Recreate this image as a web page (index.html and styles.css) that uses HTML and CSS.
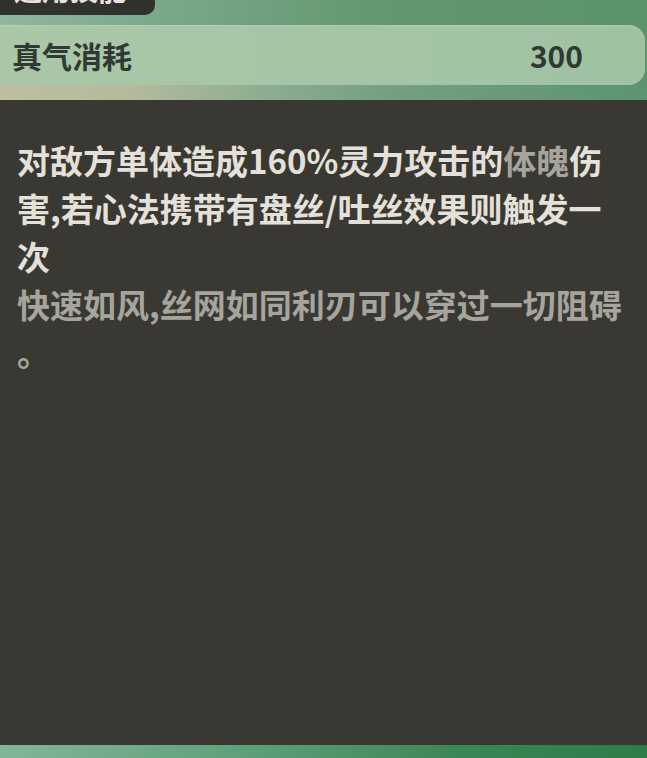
FILE: index.html
```html
<!doctype html>
<html lang="zh-CN">
  <head>
    <meta charset="UTF-8" />
    <meta name="viewport" content="width=device-width, initial-scale=1.0" />
    <title>技能详情</title>
    <link rel="stylesheet" href="styles.css">
  </head>
  <body>
    <div class="screen">
      <div class="header">
        <div class="tag"><span class="tag-text">通用技能</span></div>
        <div class="cost-bar">
          <span class="cost-label">真气消耗</span>
          <span class="cost-value">300</span>
        </div>
        <div class="rim"></div>
      </div>

      <!-- 技能描述 -->
      <div class="panel">
        <p class="desc">对敌方单体造成160%灵力攻击的<span class="muted">体魄</span>伤害,若心法携带有盘丝/吐丝效果则触发一次</p>
        <p class="desc muted">快速如风,丝网如同利刃可以穿过一切阻碍。</p>
      </div>

      <div class="footer"></div>
    </div>
  </body>
</html>
```

FILE: styles.css
```css
body {
  margin: 0;
  font-family: "Noto Sans CJK SC", "Noto Sans", sans-serif;
  background: #3a3833;
}
.screen {
  width: 647px;
  height: 758px;
  overflow: hidden;
  display: flex;
  flex-direction: column;
}
.header {
  background: linear-gradient(90deg, #8fb79c 0%, #76a686 30%, #62976f 60%, #5a936c 100%);
}
.tag {
  width: 155px;
  height: 15px;
  background: #31312d;
  border-bottom-right-radius: 10px;
  overflow: hidden;
}
.tag-text {
  display: block;
  margin-top: -27px;
  padding-left: 14px;
  font-size: 28px;
  font-weight: bold;
  line-height: 32px;
  color: #e6e4dc;
}
.cost-bar {
  margin-top: 10px;
  margin-right: 2px;
  height: 60px;
  padding: 0 62px 0 12px;
  display: flex;
  align-items: center;
  justify-content: space-between;
  background: linear-gradient(90deg, #abc7a8 0%, #a6c5a7 50%, #9fc2a2 100%);
  border-radius: 0 16px 16px 0;
  box-shadow: inset 0 1px 0 rgba(255,255,255,0.15);
}
.cost-label,
.cost-value {
  font-size: 30px;
  font-weight: bold;
  color: #303a32;
}
.rim {
  height: 15px;
  background: linear-gradient(90deg, #bdbfa0 0%, #b3bb9d 20%, #8fae91 40%, #73a080 60%, #5d9470 100%);
}
.panel {
  height: 645px;
  box-sizing: border-box;
  padding: 36px 14px 0 17px;
  background: #3a3833;
  border-top-left-radius: 8px;
}
.desc {
  margin: 0;
  font-size: 33px;
  font-weight: bold;
  line-height: 48px;
  color: #e3e1d9;
  line-break: anywhere;
}
.muted {
  color: #a6a59d;
}
.footer {
  flex: 1;
  background: linear-gradient(90deg, #82b698 0%, #5e9e77 40%, #3d8657 70%, #2f7b4a 100%);
}
```
